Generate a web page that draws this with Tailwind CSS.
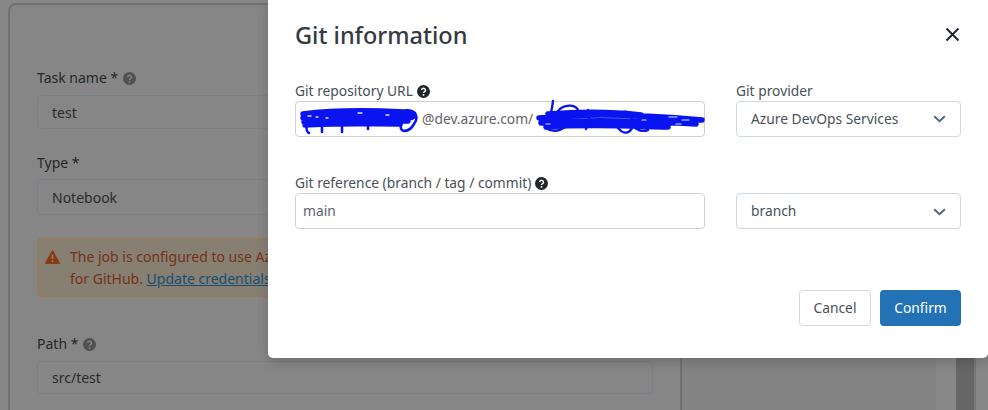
<!DOCTYPE html>
<html><head><meta charset="utf-8"><script src="https://cdn.jsdelivr.net/npm/@tailwindcss/browser@4"></script></head>
<body class="w-[988px] h-[410px] overflow-hidden relative bg-[#888888] font-['Noto_Sans','Open_Sans',sans-serif] text-[13.8px]">
<!-- page behind -->
<div class="flex h-[410px] bg-[#878787] pl-[8px] pt-[3px] text-[14px]">
  <div class="w-[674px] h-[407px] shrink-0 rounded-t-[8px] border-2 border-b-0 border-[#707070] bg-[#868686] pl-[27px] pr-[27px]">
    <div class="pt-[63px] flex items-center gap-[5px] text-[#262626] leading-[20px]">Task name *
      <svg class="w-[13px] h-[13px]" viewBox="0 0 16 16"><circle cx="8" cy="8" r="8" fill="#515151"/><path d="M5.6 6.2a2.4 2.2 0 1 1 3.6 2c-.8.5-1.2.8-1.2 1.6" fill="none" stroke="#868686" stroke-width="1.8"/><circle cx="8" cy="12.2" r="1.1" fill="#868686"/></svg>
    </div>
    <div class="mt-[7px] h-[34px] rounded-[4px] border border-[#77818c] px-[14px] flex items-center text-[#2b2b2b]">test</div>
    <div class="mt-[24px] leading-[20px] text-[#262626]">Type *</div>
    <div class="mt-[6px] h-[36px] rounded-[4px] border border-[#77818c] px-[14px] flex items-center text-[#2b2b2b]">Notebook</div>
    <div class="mt-[23px] h-[59px] rounded-[4px] border border-[#9c7a52] bg-[#877f72] pl-[7px] flex gap-[10px] pt-[7px] text-[#74321a] leading-[22px]">
      <svg class="w-[15px] h-[14px] mt-[4px] shrink-0" viewBox="0 0 16 15"><path d="M8 0.5 15.8 14.5H0.2Z" fill="#883a12" stroke="#883a12" stroke-linejoin="round"/><path d="M8 5v5" stroke="#877f72" stroke-width="1.8"/><circle cx="8" cy="12" r="1" fill="#877f72"/></svg>
      <div>The job is configured to use Azure DevOps<br>for GitHub. <span class="text-[#144f75] underline">Update credentials</span></div>
    </div>
    <div class="mt-[37px] flex items-center gap-[5px] leading-[20px] text-[#262626]">Path *
      <svg class="w-[13px] h-[13px]" viewBox="0 0 16 16"><circle cx="8" cy="8" r="8" fill="#515151"/><path d="M5.6 6.2a2.4 2.2 0 1 1 3.6 2c-.8.5-1.2.8-1.2 1.6" fill="none" stroke="#868686" stroke-width="1.8"/><circle cx="8" cy="12.2" r="1.1" fill="#868686"/></svg>
    </div>
    <div class="mt-[7px] h-[33px] rounded-[4px] border border-[#77818c] px-[14px] flex items-center text-[#2b2b2b]">src/test</div>
  </div>
  <div class="w-[254px] shrink-0 bg-[#838383] -mt-[3px]"></div>
  <div class="w-[20px] shrink-0 bg-[#888888] -mt-[3px]"></div>
  <div class="w-[20px] shrink-0 bg-[#666666] -mt-[3px] border-r-2 border-[#777777]"></div>
</div>
<!-- modal -->
<div class="absolute left-[268px] top-0 w-[720px] h-[358px] bg-white rounded-b-[5px] pl-[27px] pr-[27px] shadow-[0_4px_12px_rgba(0,0,0,0.18)]">
  <div class="flex items-center justify-between h-[70px] pt-[1px]">
    <h2 class="text-[23.5px] font-medium text-[#333a40]">Git information</h2>
    <svg class="w-[15px] h-[15px] mr-[1px] -mt-[2px]" viewBox="0 0 15 15"><path d="M1.5 1.5 13.5 13.5M13.5 1.5 1.5 13.5" stroke="#1f2933" stroke-width="2"/></svg>
  </div>
  <div class="mt-[9px] grid grid-cols-[410px_225px] gap-x-[31px]">
    <div>
      <div class="flex items-center gap-[4px] h-[22px] pt-[2px] text-[#495057]">Git repository URL
        <svg class="w-[13px] h-[13px]" viewBox="0 0 16 16"><circle cx="8" cy="8" r="8" fill="#212529"/><path d="M5.6 6.2a2.4 2.2 0 1 1 3.6 2c-.8.5-1.2.8-1.2 1.6" fill="none" stroke="#fff" stroke-width="1.8"/><circle cx="8" cy="12.2" r="1.1" fill="#fff"/></svg>
      </div>
      <div class="relative h-[36px] rounded-[4px] border border-[#cfcfcf] flex items-center text-[#5f6468]">
        <span class="pl-[126px]">@dev.azure.com/</span>
        <svg class="absolute left-0 top-0 overflow-visible" width="408" height="34" viewBox="0 0 408 34" fill="none" stroke="#0a14f0" stroke-linecap="round" stroke-linejoin="round">
          <path stroke-width="5.5" d="M7 12C30 9 70 8 108 10C114 9 119 11 118 14M7 16C40 13 75 12 116 15M8 20C40 17 75 16 112 19M9 23C40 21 70 22 104 22"/>
          <path stroke-width="2.6" d="M11 24C10 27 11 30 13 31M26 24V30M46 24V30M72 22V27M105 13C116 6 125 13 118 22C113 31 103 31 105 23C106 18 112 16 116 17"/>
          <path stroke-width="1.3" stroke="#dfe3f5" d="M12 14H15M20 15H22M30 16H32M62 11H66M90 13H93"/>
          <path stroke-width="5.5" d="M243 16C290 11 350 13 406 18M245 21C290 17 350 19 400 22M250 25C290 22 330 24 372 25M252 12C290 9 320 10 345 13"/>
          <path stroke-width="2.4" d="M257 -1C256 5 256 9 254 13M262 9C268 2 279 2 282 8C284 14 274 18 268 14M292 8C294 12 294 20 290 27M270 24C262 31 254 29 250 26M322 26C330 36 340 28 336 16C334 8 326 8 324 14M352 28C346 30 340 28 338 24"/>
          <path stroke-width="1.2" stroke="#dfe3f5" d="M250 22H254M346 18H350M373 15H381M386 18H393M380 22H385"/>
        </svg>
      </div>
    </div>
    <div>
      <div class="h-[22px] pt-[2px] flex items-center text-[#495057]">Git provider</div>
      <div class="h-[36px] rounded-[4px] border border-[#ced9e4] pl-[14px] pr-[14px] flex items-center justify-between text-[#495057]">Azure DevOps Services
        <svg class="w-[13px] h-[8px]" viewBox="0 0 13 8"><path d="M1.2 1.2 6.5 6.2 11.8 1.2" fill="none" stroke="#52677d" stroke-width="2"/></svg>
      </div>
    </div>
    <div class="mt-[34px]">
      <div class="flex items-center gap-[4px] h-[22px] pt-[2px] text-[#495057]">Git reference (branch / tag / commit)
        <svg class="w-[13px] h-[13px]" viewBox="0 0 16 16"><circle cx="8" cy="8" r="8" fill="#212529"/><path d="M5.6 6.2a2.4 2.2 0 1 1 3.6 2c-.8.5-1.2.8-1.2 1.6" fill="none" stroke="#fff" stroke-width="1.8"/><circle cx="8" cy="12.2" r="1.1" fill="#fff"/></svg>
      </div>
      <div class="h-[36px] rounded-[4px] border border-[#cfcfcf] px-[7px] flex items-center text-[#5f6468]">main</div>
    </div>
    <div class="mt-[34px]">
      <div class="h-[22px]"></div>
      <div class="h-[36px] rounded-[4px] border border-[#ced9e4] pl-[14px] pr-[14px] pt-[1px] flex items-center justify-between text-[#495057]">branch
        <svg class="w-[13px] h-[8px]" viewBox="0 0 13 8"><path d="M1.2 1.2 6.5 6.2 11.8 1.2" fill="none" stroke="#52677d" stroke-width="2"/></svg>
      </div>
    </div>
  </div>
  <div class="mt-[61px] flex justify-end gap-[9px]">
    <button class="w-[72px] h-[36px] rounded-[4px] border border-[#ced9e4] bg-white text-[#495057]">Cancel</button>
    <button class="w-[81px] h-[36px] rounded-[4px] bg-[#2272b5] text-white">Confirm</button>
  </div>
</div>
</body></html>
